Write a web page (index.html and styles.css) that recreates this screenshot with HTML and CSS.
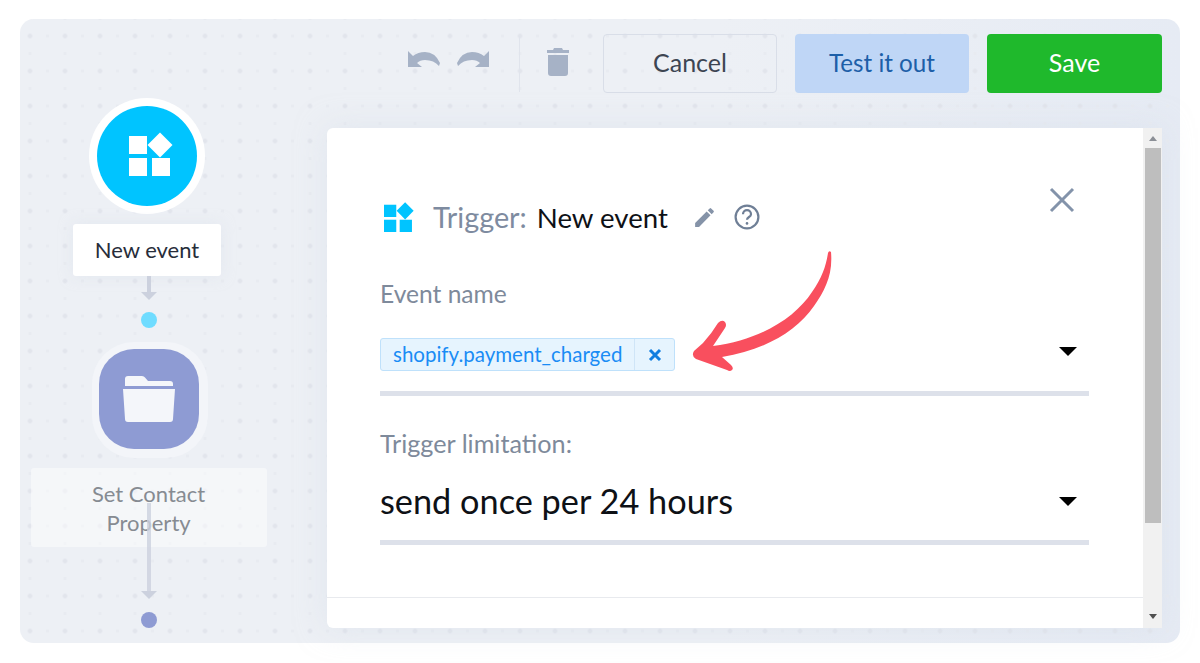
FILE: index.html
```html
<!DOCTYPE html>
<html lang='en'>
<head>
    <meta charset='UTF-8'>
    <title>Trigger: New event</title>
    <link rel="stylesheet" href="styles.css">
</head>
<body>
    <div class='stage'>
        <div class='flow'>
            <div class='node-ring node-ring-round'>
                <div class='node-icon node-icon-event'>
                    <svg class='event-glyph' width='44' height='44' viewBox='0 -4 44 44'><use href='#blocks' /></svg>
                </div>
            </div>
            <div class='node-label'>New event</div>
            <div class='link'>
                <div class='link-line'></div>
                <div class='link-head'></div>
            </div>
            <div class='dot dot-event'></div>

            <div class='node-ring node-ring-square'>
                <div class='node-icon node-icon-folder'>
                    <svg width='52' height='46' viewBox='0 0 52 46'>
                        <path d='M2 10V3q0-3 3-3h14q2 0 3 1.5L25 5h22q3 0 3 3v2z' />
                        <path d='M0 13h52l-2 30q0 3-3 3H5q-3 0-3-3z' />
                    </svg>
                </div>
            </div>
            <div class='node-label node-label-faded'>Set Contact<br>Property
                <div class='link link-over'>
                    <div class='link-line'></div>
                    <div class='link-head'></div>
                </div>
            </div>
            <div class='dot dot-folder'></div>
        </div>

        <div class='main'>
            <div class='toolbar'>
                <svg class='tool-icon' width='32' height='16' viewBox='0 0 32 16'>
                    <path d='M0 0l5 5Q10 1 17 1q10 0 15 11l-1 3q-5-6-14-6-5 0-8 3l5 4H0z' />
                </svg>
                <svg class='tool-icon tool-redo' width='32' height='16' viewBox='0 0 32 16'>
                    <path d='M32 0l-5 5Q22 1 15 1 5 1 0 12l1 3q5-6 14-6 5 0 8 3l-5 4h14z' />
                </svg>
                <div class='tool-sep'></div>
                <svg class='tool-icon tool-trash' width='22' height='29' viewBox='0 0 22 29'>
                    <path d='M0 3h6l1-2h8l1 2h6v3H0zM1 8h20v18q0 3-3 3H4q-3 0-3-3z' />
                </svg>
                <button class='btn btn-cancel'>Cancel</button>
                <button class='btn btn-test'>Test it out</button>
                <button class='btn btn-save'>Save</button>
            </div>

            <div class='panel'>
                <div class='panel-body'>
                    <div class='panel-head'>
                        <svg class='head-icon' width='30' height='30' viewBox='0 -4 44 44'><use href='#blocks' /></svg>
                        <span class='head-key'>Trigger:</span>
                        <span class='head-name'>New event</span>
                        <svg class='head-edit' width='25' height='25' viewBox='0 0 24 24'>
                            <path d='M3 17.25V21h3.75L17.8 9.94l-3.75-3.75zM20.7 7.04a1 1 0 0 0 0-1.41l-2.34-2.34a1 1 0 0 0-1.41 0l-1.83 1.83 3.75 3.75z' />
                        </svg>
                        <svg class='head-help' width='26' height='26' viewBox='0 0 26 26'>
                            <circle cx='13' cy='13' r='11.4' />
                            <path d='M9 10.2a4 4 0 0 1 8 0c0 2.8-4 2.8-4 5.6' />
                            <circle class='help-dot' cx='13' cy='19.4' r='1.3' />
                        </svg>
                    </div>
                    <svg class='panel-close' width='26' height='26' viewBox='0 0 26 26'>
                        <path d='M2 2l22 22M24 2L2 24' />
                    </svg>

                    <div class='field-label field-label-first'>Event name</div>
                    <div class='field field-tags'>
                        <div class='tag'>
                            <span class='tag-text'>shopify.payment_charged</span>
                            <span class='tag-remove'>
                                <svg width='14' height='14' viewBox='0 0 14 14'><path d='M2 2l10 10M12 2L2 12' /></svg>
                            </span>
                        </div>
                        <div class='caret caret-tags'></div>
                    </div>

                    <div class='field-label field-label-second'>Trigger limitation:</div>
                    <div class='field field-value'>
                        <span>send once per 24 hours</span>
                        <div class='caret'></div>
                    </div>

                    <div class='panel-foot'></div>
                </div>
                <div class='scrollbar'>
                    <div class='scroll-up'></div>
                    <div class='scroll-thumb'></div>
                    <div class='scroll-down'></div>
                </div>
            </div>
        </div>

        <svg class='pointer' width='150' height='130' viewBox='690 245 150 130'>
            <path d='M828 253Q829 250 831 252C833 275 825 290 814 306C797 331 765 350 722 357L731 365Q734 368 732 370Q730 372 727 370L696 359Q691 356 694 351L703 343Q712 333 718 323Q722 319 725 322Q727 325 725 328L713 346C760 340 795 318 812 292C822 278 826 266 828 253Z' />
        </svg>
    </div>

    <svg class='defs' width='0' height='0'>
        <defs>
            <g id='blocks'>
                <rect x='0' y='0' width='18' height='18' />
                <rect x='0' y='22' width='18' height='18' />
                <rect x='23' y='22' width='18' height='18' />
                <polygon points='31,-3.5 43.5,9 31,21.5 18.5,9' />
            </g>
        </defs>
    </svg>
</body>
</html>
```

FILE: styles.css
```css
html, body { margin: 0; padding: 0; background: white; }
body {
    font-family: Lato, "Open Sans", sans-serif;
    width: 1200px; height: 663px;
    padding: 19px 20px 20px;
    box-sizing: border-box;
    overflow: hidden;
}
.defs { position: absolute; }

.stage {
    position: relative;
    display: flex;
    height: 624px;
    box-sizing: border-box;
    padding: 15px 18px 15px 11px;
    border-radius: 14px;
    background-color: #ecf0f5;
    background-image:
        radial-gradient(circle, #e2e5ec 2px, transparent 2.5px),
        radial-gradient(circle, #e8ebf1 1.6px, transparent 2px),
        radial-gradient(circle, #e8ebf1 1.6px, transparent 2px),
        linear-gradient(90deg, #edf0f5 0%, #edf0f5 60%, #e6ebf4 100%);
    background-size: 35px 35px, 35px 35px, 35px 35px, 100% 100%;
    background-position: -7.5px -0.5px, 10px -0.5px, -7.5px 17px, 0 0;
}

/* left column */
.flow {
    width: 236px;
    margin-right: 60px;
    padding-top: 64px;
    display: flex;
    flex-direction: column;
    align-items: center;
    flex-shrink: 0;
}
.node-ring {
    width: 116px; height: 116px;
    box-sizing: border-box;
    padding: 8px;
    background: white;
    flex-shrink: 0;
}
.node-ring-round { border-radius: 50%; margin-left: -4px; }
.node-ring-square { background: #f3f5f9; border-radius: 42px; margin: 14px 0 0 2px; padding: 7px; }
.node-icon {
    width: 100px; height: 100px;
    display: flex; align-items: center; justify-content: center;
}
.node-icon-event { background: #00c4ff; border-radius: 50%; fill: white; }
.event-glyph { margin: -4px 0 0 7px; }
.node-icon-folder { background: #8e9bd3; border-radius: 35px; fill: #f4f6fa; }
.node-label {
    width: 148px; height: 52px;
    margin-top: 10px;
    margin-left: -4px;
    flex-shrink: 0;
    background: white;
    border-radius: 3px;
    text-align: center;
    font-size: 22px;
    line-height: 52px;
    color: #272d3a;
    box-shadow: 0 0 14px rgba(220, 226, 236, 0.5);
}
.node-label-faded {
    position: relative;
    width: 236px; height: 79px;
    margin-left: 0;
    padding: 11px 1px 0 0;
    box-sizing: border-box;
    line-height: 29px;
    background: rgba(255, 255, 255, 0.45);
    color: #868b92;
    box-shadow: none;
}
.link {
    width: 16px;
    display: flex; flex-direction: column; align-items: center;
}
.link-line { width: 4px; height: 16px; background: #ccd1de; }
.link-head {
    width: 0; height: 0;
    border-left: 8px solid transparent;
    border-right: 8px solid transparent;
    border-top: 8px solid #ccd1de;
}
.link-over { position: absolute; left: 110px; top: 35px; }
.link-over .link-line { height: 88px; background: rgba(204, 209, 222, 0.8); }
.dot { width: 16px; height: 16px; border-radius: 50%; flex-shrink: 0; }
.dot-event { background: #6fdcff; margin-top: 12px; }
.dot-folder { background: #8e9bd3; margin-top: 65px; }

/* toolbar */
.main { flex: 1; display: flex; flex-direction: column; }
.toolbar {
    height: 59px;
    display: flex; align-items: center; justify-content: flex-end;
    margin-bottom: 35px;
}
.tool-icon { fill: #a6b2c6; margin-top: -10px; }
.tool-redo { margin-left: 17px; }
.tool-sep { width: 1px; height: 56px; background: #e0e4ec; margin: 0 27px 0 30px; }
.tool-trash { margin: -5px 34px 0 0; }
.btn {
    width: 174px; height: 59px;
    margin-left: 18px;
    padding: 0 0 3px;
    border: 1px solid transparent;
    border-radius: 4px;
    font-family: Lato, sans-serif;
    font-size: 25px;
}
.btn-cancel { margin-left: 0; background: transparent; border-color: #d9dee8; color: #3d4552; }
.btn-test { background: #bfd6f6; color: #1d5fa8; font-size: 24.2px; }
.btn-save { width: 175px; background: #1fb92c; color: white; }

/* panel */
.panel {
    height: 500px;
    display: flex;
    background: white;
    border-radius: 6px 0 0 6px;
    box-shadow: 0 0 30px rgba(214, 221, 234, 0.5);
}
.panel-body {
    position: relative;
    flex: 1;
    box-sizing: border-box;
    padding: 74px 54px 0 53px;
}
.panel-head { display: flex; align-items: center; height: 30px; font-size: 27.6px; }
.head-icon { fill: #00c4ff; margin-left: 4px; }
.head-key { color: #7e8ba0; margin-left: 19px; font-size: 28.8px; }
.head-name { color: #0e1116; margin-left: 10px; }
.head-edit { fill: #8593a8; margin-left: 24px; }
.head-help { fill: none; stroke: #6f7f96; stroke-width: 2.2; margin-left: 17px; }
.help-dot { fill: #6f7f96; stroke: none; }
.panel-close {
    position: absolute;
    right: 68px; top: 59px;
    fill: none; stroke: #8393aa; stroke-width: 3;
}
.field-label { line-height: 30px; color: #7e8a9b; }
.field-label-first { margin-top: 47px; font-size: 24.6px; }
.field-label-second { margin-top: 32px; font-size: 25.2px; }
.field {
    display: flex; justify-content: space-between; align-items: center;
    border-bottom: 5px solid #dde1ea;
    padding-right: 12px;
}
.field-tags { padding-top: 29px; padding-bottom: 20px; }
.field-value {
    padding-top: 22px; padding-bottom: 18px;
    font-size: 34.3px; line-height: 42px;
    color: #0e1116;
}
.tag {
    display: flex;
    height: 33px;
    box-sizing: border-box;
    border: 1px solid #bfe1fb;
    border-radius: 3px;
    background: #e6f4fe;
    color: #1a8cf5;
    font-size: 20.5px;
    line-height: 31px;
}
.tag-text { padding: 0 12px 0 12px; border-right: 1px solid #cfe5f7; }
.tag-remove {
    width: 39px;
    display: flex; align-items: center; justify-content: center;
}
.tag-remove svg { fill: none; stroke: #0f7ee0; stroke-width: 3; }
.caret {
    width: 0; height: 0;
    border-left: 9px solid transparent;
    border-right: 9px solid transparent;
    border-top: 9px solid black;
}
.caret-tags { margin-top: -7px; }
.panel-foot { margin: 52px -54px 0 -53px; border-top: 1px solid #e8eaee; }

.scrollbar {
    width: 19px;
    background: #f1f1f1;
    flex-shrink: 0;
    display: flex; flex-direction: column; align-items: center;
}
.scroll-up {
    width: 0; height: 0;
    margin-top: 8px;
    border-left: 4px solid transparent;
    border-right: 4px solid transparent;
    border-bottom: 5px solid #8b8f96;
}
.scroll-thumb { width: 16px; height: 375px; margin-top: 7px; background: #bebebe; }
.scroll-down {
    width: 0; height: 0;
    margin-top: auto;
    margin-bottom: 9px;
    border-left: 4px solid transparent;
    border-right: 4px solid transparent;
    border-top: 5px solid #505050;
}

/* annotation */
.pointer { position: absolute; left: 670px; top: 226px; fill: #f94f5e; }
```
